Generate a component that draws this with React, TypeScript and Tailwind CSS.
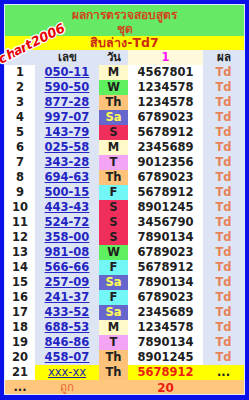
import React from "react";

type Day = "M" | "T" | "W" | "Th" | "F" | "Sa" | "S";

interface Row {
  no: number;
  num: string;
  day: Day;
  value: string;
}

const dayStyle: Record<Day, string> = {
  M: "bg-[#fff8c8] text-[#202020]",
  T: "bg-[#f4a4f4] text-[#202020]",
  W: "bg-[#5ef05e] text-[#202020]",
  Th: "bg-[#fdc27a] text-[#202020]",
  F: "bg-[#72f6f6] text-[#202020]",
  Sa: "bg-[#6666cc] text-[#ffff55]",
  S: "bg-[#f02e5c] text-[#202020]",
};

const rows: Row[] = [
  { no: 1, num: "050-11", day: "M", value: "4567801" },
  { no: 2, num: "590-50", day: "W", value: "1234578" },
  { no: 3, num: "877-28", day: "Th", value: "1234578" },
  { no: 4, num: "997-07", day: "Sa", value: "6789023" },
  { no: 5, num: "143-79", day: "S", value: "5678912" },
  { no: 6, num: "025-58", day: "M", value: "2345689" },
  { no: 7, num: "343-28", day: "T", value: "9012356" },
  { no: 8, num: "694-63", day: "Th", value: "6789023" },
  { no: 9, num: "500-15", day: "F", value: "5678912" },
  { no: 10, num: "443-43", day: "S", value: "8901245" },
  { no: 11, num: "524-72", day: "S", value: "3456790" },
  { no: 12, num: "358-00", day: "S", value: "7890134" },
  { no: 13, num: "981-08", day: "W", value: "6789023" },
  { no: 14, num: "566-66", day: "F", value: "5678912" },
  { no: 15, num: "257-09", day: "Sa", value: "7890134" },
  { no: 16, num: "241-37", day: "F", value: "6789023" },
  { no: 17, num: "433-52", day: "Sa", value: "2345689" },
  { no: 18, num: "688-53", day: "M", value: "1234578" },
  { no: 19, num: "846-86", day: "T", value: "7890134" },
  { no: 20, num: "458-07", day: "Th", value: "8901245" },
];

const font = { fontFamily: '"DejaVu Sans", Tahoma, "Noto Sans", sans-serif' };

// "chart2006" stamp laid along a diagonal, glyph by glyph
const stampXs = "1 9 16 23 28 34 42 50 58";
const stampYs = "64 60 56 53 50 47 43 39 35";

const Stamp = () => (
  <svg className="absolute left-0 top-0" width="80" height="70" viewBox="0 0 80 70">
    <text
      x={stampXs}
      y={stampYs}
      rotate="-27"
      fontFamily="DejaVu Sans, sans-serif"
      fontSize="13"
      fontWeight="bold"
      fontStyle="italic"
      fill="#e80000"
      stroke="#ffffff"
      strokeWidth="2.5"
      paintOrder="stroke"
      strokeLinejoin="round"
    >
      chart2006
    </text>
  </svg>
);

const App = () => {
  return (
    <div className="relative w-[249px] h-[400px] bg-[#0a10e8] pt-[4px] pl-[4px] pr-[4px] pb-[5px]" style={font}>
      <div className="h-full border border-[#e2eaff] bg-white overflow-hidden">
        <table className="w-full table-fixed border-collapse text-[11.5px] font-bold leading-none">
          <colgroup>
            <col className="w-[30px]" />
            <col className="w-[64px]" />
            <col className="w-[29px]" />
            <col className="w-[75px]" />
            <col className="w-[41px]" />
          </colgroup>
          <thead>
            <tr className="bg-[#66ea66] text-[#d0481c]">
              <th colSpan={5} className="h-[31px] pt-[3px] text-[12px] font-bold leading-[14px]">
                <div>ผลการตรวจสอบสูตร</div>
                <div>ชุด</div>
              </th>
            </tr>
            <tr className="bg-[#ffff00] text-[#cc2a10]">
              <th colSpan={5} className="h-[14px] text-[12.5px] font-bold">
                สิบล่าง-Td7
              </th>
            </tr>
            <tr className="h-[15px] bg-[#dde4f4] text-[#202020]">
              <th className="font-bold"></th>
              <th className="font-bold">เลข</th>
              <th className="font-bold">วัน</th>
              <th className="bg-[#fffadc] text-[#ff10ff] font-bold">1</th>
              <th className="font-bold">ผล</th>
            </tr>
          </thead>
          <tbody>
            {rows.map((r) => (
              <tr key={r.no} className="h-[15px]">
                <td className="bg-white text-center text-[#202020]">{r.no}</td>
                <td className="bg-[#dde4f4] text-center">
                  <span className="text-[#2424c4] underline decoration-1 underline-offset-[1px]">{r.num}</span>
                </td>
                <td className={`text-center ${dayStyle[r.day]}`}>{r.day}</td>
                <td className="bg-white text-center text-[#202020]">{r.value}</td>
                <td className="bg-[#dde4f4] text-center text-[#e88258]">Td</td>
              </tr>
            ))}
            <tr className="h-[15px]">
              <td className="bg-white text-center text-[#202020]">21</td>
              <td className="bg-[#ffff00] text-center">
                <span className="text-[#2424a0] underline decoration-1 underline-offset-[1px] font-normal">xxx-xx</span>
              </td>
              <td className="bg-[#fdc27a] text-center text-[#202020]">Th</td>
              <td className="bg-[#ffff00] text-center text-[#ee1c10]">5678912</td>
              <td className="bg-[#ffff00] text-center text-[#202020]">...</td>
            </tr>
            <tr className="h-[16px] bg-[#ffc67e]">
              <td className="text-center text-[#202020]">...</td>
              <td className="text-center text-[#e8602c] font-normal">ถูก</td>
              <td></td>
              <td className="text-center text-[#ee1c10] text-[12px]">20</td>
              <td></td>
            </tr>
          </tbody>
        </table>
      </div>
      <Stamp />
    </div>
  );
};

export default App;
